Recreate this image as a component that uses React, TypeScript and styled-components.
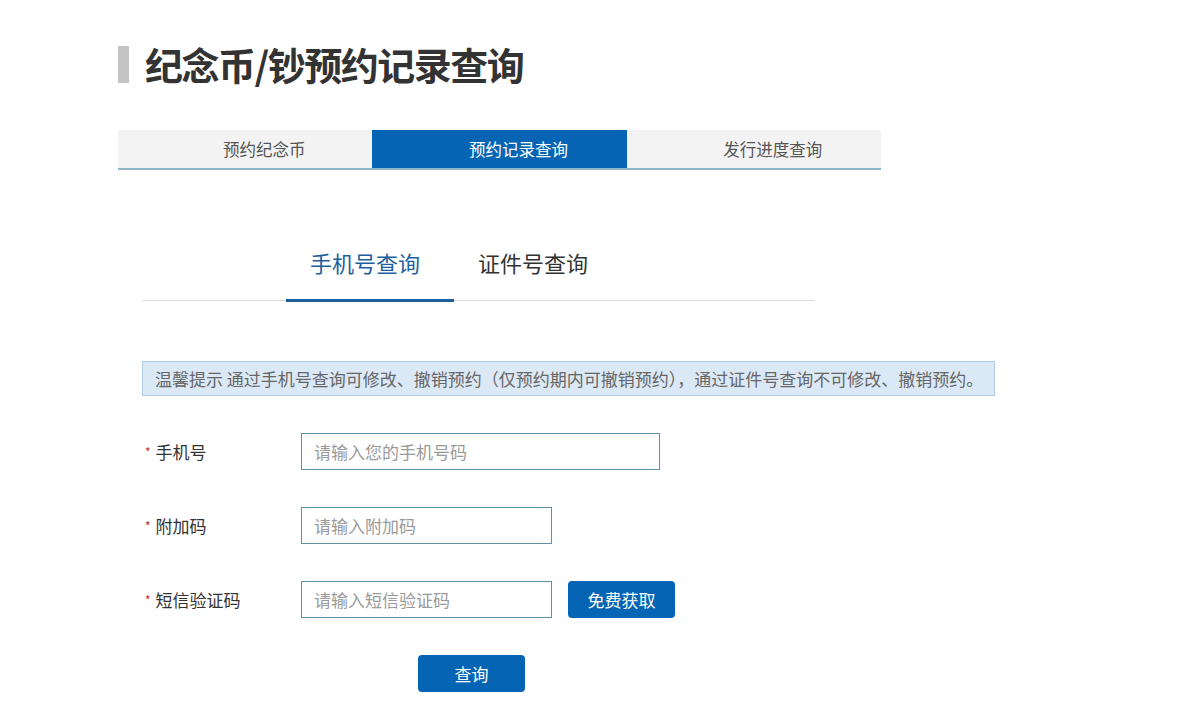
import React, { useState } from "react";
import styled, { createGlobalStyle } from "styled-components";

const GlobalStyle = createGlobalStyle`
  html, body {
    margin: 0;
    padding: 0;
    background: #fff;
    font-family: "Noto Sans CJK SC", "Noto Sans", "Liberation Sans", sans-serif;
    color: #333;
  }
  * { box-sizing: border-box; }
`;

const navTabs = ["预约纪念币", "预约记录查询", "发行进度查询"];
const queryTabs = ["手机号查询", "证件号查询"];

interface FieldProps {
  label: string;
  placeholder: string;
  width: number;
  withButton?: boolean;
}

const Field = ({ label, placeholder, width, withButton }: FieldProps): JSX.Element => (
  <Row>
    <Label>
      <Star>*</Star>
      {label}
    </Label>
    <Input placeholder={placeholder} $width={width} />
    {withButton && <SmsButton type="button">免费获取</SmsButton>}
  </Row>
);

const App = (): JSX.Element => {
  const [nav, setNav] = useState(1);
  const [query, setQuery] = useState(0);

  return (
    <>
      <GlobalStyle />
      <Page>
        <Title>
          <TitleBar />
          纪念币/钞预约记录查询
        </Title>

        <NavTabs>
          {navTabs.map((t, i) => (
            <NavTab key={t} $active={i === nav} onClick={() => setNav(i)}>
              {t}
            </NavTab>
          ))}
        </NavTabs>

        <Content>
          <QueryTabs>
            {queryTabs.map((t, i) => (
              <QueryTab key={t} $active={i === query} onClick={() => setQuery(i)}>
                {t}
              </QueryTab>
            ))}
          </QueryTabs>

          <Notice>温馨提示 通过手机号查询可修改、撤销预约（仅预约期内可撤销预约），通过证件号查询不可修改、撤销预约。</Notice>

          <Form>
            <Field label="手机号" placeholder="请输入您的手机号码" width={359} />
            <Field label="附加码" placeholder="请输入附加码" width={251} />
            <Field label="短信验证码" placeholder="请输入短信验证码" width={251} withButton />
            <SubmitButton type="button">查询</SubmitButton>
          </Form>
        </Content>
      </Page>
    </>
  );
};

const Page = styled.div`
  padding: 42px 0 40px 118px;
`;

const Title = styled.h1`
  display: flex;
  align-items: center;
  margin: 0;
  height: 44px;
  font-size: 38px;
  font-weight: 700;
  letter-spacing: -1.5px;
  color: #333;
  line-height: 44px;
`;

const TitleBar = styled.span`
  display: inline-block;
  width: 11px;
  height: 37px;
  margin-right: 16px;
  background: #c4c4c4;
`;

const NavTabs = styled.div`
  display: grid;
  grid-template-columns: repeat(3, 1fr);
  width: 763px;
  margin-top: 44px;
  border-bottom: 2px solid #8db6c6;
`;

const NavTab = styled.div<{ $active: boolean }>`
  height: 38px;
  padding-left: 38px;
  line-height: 38px;
  text-align: center;
  font-size: 16.5px;
  color: ${(p) => (p.$active ? "#fff" : "#555")};
  background: ${(p) => (p.$active ? "#0565b4" : "#f3f3f3")};
  cursor: pointer;
`;

const Content = styled.div`
  padding-left: 24px;
`;

const QueryTabs = styled.div`
  display: flex;
  width: 672px;
  margin-top: 60px;
  padding-left: 144px;
  border-bottom: 1px solid #dcdcdc;
`;

const QueryTab = styled.div<{ $active: boolean }>`
  width: 168px;
  height: 72px;
  padding-left: 24px;
  line-height: 64px;
  font-size: 22px;
  color: ${(p) => (p.$active ? "#1c5f9e" : "#333")};
  border-bottom: 3px solid ${(p) => (p.$active ? "#1a5e9a" : "transparent")};
  margin-bottom: -2px;
  cursor: pointer;
`;

const Notice = styled.div`
  width: 853px;
  height: 35px;
  margin-top: 60px;
  padding: 0 12px;
  line-height: 33px;
  font-size: 17px;
  color: #666;
  background: #dbe9f7;
  border: 1px solid #aecce4;
  white-space: nowrap;
`;

const Form = styled.div`
  display: flex;
  flex-direction: column;
  gap: 37px;
  margin-top: 37px;
`;

const Row = styled.div`
  display: flex;
  align-items: center;
`;

const Label = styled.label`
  width: 159px;
  padding-left: 3px;
  font-size: 17px;
  color: #333;
`;

const Star = styled.span`
  margin-right: 5px;
  font-size: 12px;
  color: #d0252b;
  vertical-align: 2px;
`;

const Input = styled.input<{ $width: number }>`
  width: ${(p) => p.$width}px;
  height: 37px;
  padding: 0 12px;
  border: 1px solid #5e90a8;
  outline: none;
  font-family: inherit;
  font-size: 17px;
  color: #333;

  &::placeholder {
    color: #9a9a9a;
  }
`;

const SmsButton = styled.button`
  width: 107px;
  height: 37px;
  margin-left: 16px;
  border: none;
  border-radius: 4px;
  background: #0565b4;
  color: #fff;
  font-family: inherit;
  font-size: 17px;
  cursor: pointer;
`;

const SubmitButton = styled(SmsButton)`
  margin-left: 276px;
`;

export default App;
